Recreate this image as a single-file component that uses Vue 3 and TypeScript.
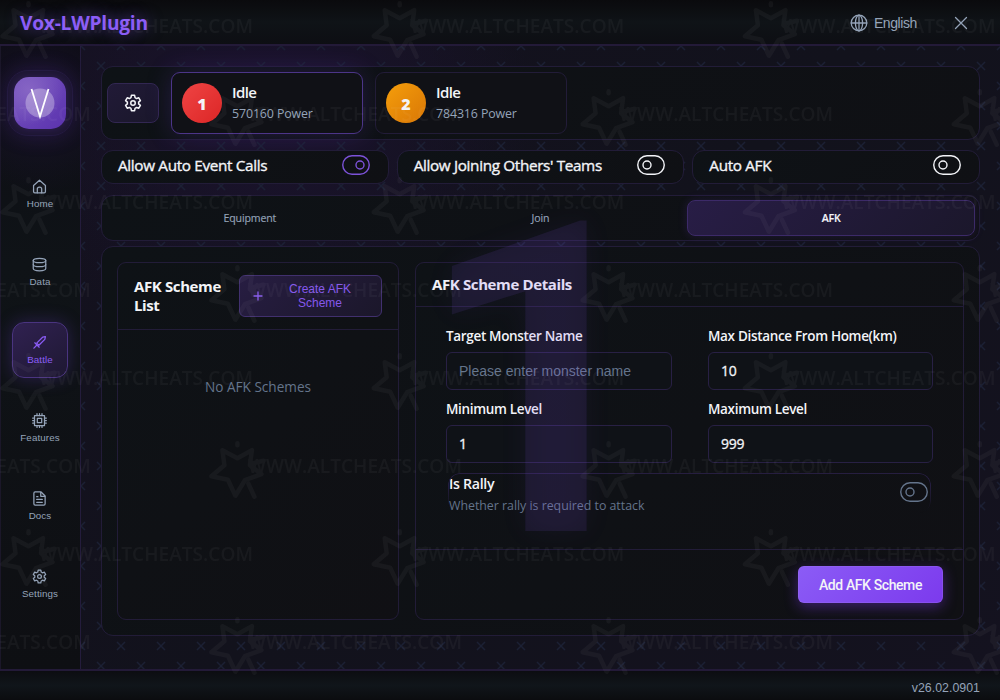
<template>
  <div class="app">
    <header class="title-bar">
      <h1 class="brand">Vox-LWPlugin</h1>
      <div class="title-actions">
        <button class="lang-btn">
          <svg width="18" height="18" viewBox="0 0 18 18" class="icon">
            <circle cx="9" cy="9" r="7.8" />
            <ellipse cx="9" cy="9" rx="3.6" ry="7.8" />
            <path d="M9 1.2v15.6M1.2 9h15.6" />
          </svg>
          <span>English</span>
        </button>
        <button class="close-btn" @click="closeWindow">
          <svg width="14" height="14" viewBox="0 0 14 14" class="icon"><path d="M1.5 1.5l11 11M12.5 1.5l-11 11" /></svg>
        </button>
      </div>
    </header>

    <div class="body">
      <aside class="sidebar">
        <div class="logo-halo">
          <div class="logo">
            <svg width="52" height="52" viewBox="0 0 52 52">
              <circle cx="26" cy="26" r="14.5" fill="#fff" fill-opacity="0.3" />
              <path d="M17.5 12L26 39.5 34.5 12" fill="none" stroke="#fff" stroke-width="1.8" />
            </svg>
          </div>
        </div>
        <nav class="nav">
          <button
            v-for="item in navItems"
            :key="item.label"
            class="nav-item"
            :class="{ active: item.label === activeNav }"
            @click="activeNav = item.label"
          >
            <svg width="15" height="15" viewBox="0 0 24 24" class="nav-icon">
              <path v-for="d in item.paths" :key="d" :d="d" />
            </svg>
            <span>{{ item.label }}</span>
          </button>
        </nav>
      </aside>

      <main class="content">
        <section class="panel account-bar">
          <button class="gear-btn">
            <svg width="18" height="18" viewBox="0 0 24 24" class="gear-icon">
              <path :d="gearPath" />
              <circle cx="12" cy="12" r="3" />
            </svg>
          </button>
          <div
            v-for="account in accounts"
            :key="account.id"
            class="account"
            :class="{ selected: account.id === selectedId }"
            @click="selectedId = account.id"
          >
            <div class="badge" :class="account.tone">{{ account.id }}</div>
            <div class="account-info">
              <div class="account-state">{{ account.state }}</div>
              <div class="account-power">{{ account.power }} Power</div>
            </div>
          </div>
        </section>

        <section class="toggles">
          <div v-for="t in toggles" :key="t.label" class="panel toggle-card">
            <span>{{ t.label }}</span>
            <svg width="28" height="20" viewBox="0 0 28 20" class="toggle" :class="{ on: t.on }" @click="t.on = !t.on">
              <rect x="0.75" y="0.75" width="26.5" height="18.5" rx="9.25" />
              <circle :cx="t.on ? 18 : 10" cy="10" r="4" />
            </svg>
          </div>
        </section>

        <section class="panel tabs">
          <button v-for="tab in tabs" :key="tab" class="tab" :class="{ active: tab === activeTab }" @click="activeTab = tab">
            {{ tab }}
          </button>
        </section>

        <section class="panel workspace">
          <div class="card list-card">
            <div class="list-header">
              <h2>AFK Scheme List</h2>
              <button class="create-btn">
                <svg width="10" height="10" viewBox="0 0 10 10" class="icon"><path d="M5 1v8M1 5h8" /></svg>
                <span>Create AFK Scheme</span>
              </button>
            </div>
            <div class="empty">No AFK Schemes</div>
          </div>

          <div class="card detail-card">
            <div class="detail-header"><h2>AFK Scheme Details</h2></div>
            <div class="form">
              <div class="form-grid">
                <label class="field">
                  <span>Target Monster Name</span>
                  <input v-model="form.monster" type="text" placeholder="Please enter monster name" />
                </label>
                <label class="field">
                  <span>Max Distance From Home(km)</span>
                  <input v-model="form.distance" type="text" />
                </label>
                <label class="field">
                  <span>Minimum Level</span>
                  <input v-model="form.minLevel" type="text" />
                </label>
                <label class="field">
                  <span>Maximum Level</span>
                  <input v-model="form.maxLevel" type="text" />
                </label>
              </div>
              <div class="rally">
                <div>
                  <div class="rally-title">Is Rally</div>
                  <div class="rally-hint">Whether rally is required to attack</div>
                </div>
                <svg width="28" height="20" viewBox="0 0 28 20" class="toggle muted" @click="form.rally = !form.rally">
                  <rect x="0.75" y="0.75" width="26.5" height="18.5" rx="9.25" />
                  <circle :cx="form.rally ? 18 : 10" cy="10" r="4" />
                </svg>
              </div>
            </div>
            <div class="detail-footer">
              <button class="submit-btn">Add AFK Scheme</button>
            </div>
          </div>
        </section>
      </main>
    </div>

    <footer class="status-bar">v26.02.0901</footer>

    <div class="ghost-number">{{ selectedId }}</div>

    <svg class="watermark" width="1000" height="700" viewBox="0 0 1000 700">
      <g v-for="m in marks" :key="m.key" :transform="`translate(${m.x} ${m.y})`">
        <path
          d="M-15 -20.5L0 -12.5 14.5 -20.5 12.5 -5.5 24 3.5 7.5 9.5 -2 25 -9.5 9 -26 5.5 -13 -5.5Z M0 -27.5v2 M11 13l6 13 M14 -7l12 -3"
        />
        <text x="10.5" y="2" textLength="214">WWW.ALTCHEATS.COM</text>
      </g>
    </svg>
  </div>
</template>

<script setup lang="ts">
import { reactive, ref } from "vue";

interface NavItem {
  label: string;
  paths: string[];
}

interface Account {
  id: number;
  state: string;
  power: number;
  tone: string;
}

// six-tooth gear on a 24x24 grid
const buildGear = () => {
  const points: string[] = [];
  for (let k = 0; k < 6; k++) {
    const base = -90 + k * 60;
    for (const [offset, radius] of [[-21, 7.6], [-12, 10.4], [12, 10.4], [21, 7.6]]) {
      const a = ((base + offset) * Math.PI) / 180;
      points.push(`${(12 + radius * Math.cos(a)).toFixed(2)} ${(12 + radius * Math.sin(a)).toFixed(2)}`);
    }
  }
  return `M${points.join("L")}Z`;
};

const gearPath = buildGear();

const navItems: NavItem[] = [
  { label: "Home", paths: ["M2.5 10.5L12 2l9.5 8.5V20q0 2-2 2h-15q-2 0-2-2z", "M8.5 22v-6q0-3 3.5-3t3.5 3v6"] },
  {
    label: "Data",
    paths: [
      "M2 5.5c0-2 4-3.5 10-3.5s10 1.5 10 3.5-4 3.5-10 3.5S2 7.5 2 5.5z",
      "M2 5.5v13c0 2 4 3.5 10 3.5s10-1.5 10-3.5v-13",
      "M2 12c0 2 4 3.5 10 3.5s10-1.5 10-3.5",
    ],
  },
  { label: "Battle", paths: ["M7.5 13L17 3.5l4.5-1-1 4.5L11 16.5z", "M4.5 12.5l7 7", "M7.5 16.5l-4.5 4.5"] },
  {
    label: "Features",
    paths: [
      "M4 4h16v16H4z",
      "M8.5 8.5h7v7h-7z",
      "M8 1v3M12 1v3M16 1v3M8 20v3M12 20v3M16 20v3M1 8h3M1 12h3M1 16h3M20 8h3M20 12h3M20 16h3",
    ],
  },
  {
    label: "Docs",
    paths: ["M5 1.5h9.5L21 8v12.5q0 2-2 2H5q-2 0-2-2v-17q0-2 2-2z", "M14 2v6.5h6.5", "M7.5 9h2M7.5 13.5h9M7.5 18h9"],
  },
  { label: "Settings", paths: [gearPath, "M15 12a3 3 0 1 1-6 0 3 3 0 0 1 6 0z"] },
];

const accounts: Account[] = [
  { id: 1, state: "Idle", power: 570160, tone: "red" },
  { id: 2, state: "Idle", power: 784316, tone: "orange" },
];

const toggles = reactive([
  { label: "Allow Auto Event Calls", on: true },
  { label: "Allow Joining Others' Teams", on: false },
  { label: "Auto AFK", on: false },
]);

const tabs = ["Equipment", "Join", "AFK"];

const activeNav = ref("Battle");
const activeTab = ref("AFK");
const selectedId = ref(1);

const form = reactive({
  monster: "",
  distance: "10",
  minLevel: "1",
  maxLevel: "999",
  rally: false,
});

// odd rows are shifted so the marks form a brick layout
const marks = Array.from({ length: 8 }, (_, row) =>
  [0, 1, 2, 3].map((col) => ({
    key: `${row}-${col}`,
    x: 28.5 + col * 371.2 - (row % 2 ? 162.3 : 0),
    y: 30.7 + row * 88,
  }))
)
  .flat()
  .filter((m) => m.x < 1020);

const closeWindow = () => window.close();
</script>

<style>
body {
  background: #0d0f14;
}
</style>

<style scoped>
* {
  box-sizing: border-box;
}

.app {
  position: relative;
  display: flex;
  flex-direction: column;
  width: 1000px;
  height: 700px;
  overflow: hidden;
  color: #f3f4f8;
  font-family: "Open Sans", "Noto Sans", sans-serif;
  background: #14121f;
}

button {
  font-family: "Liberation Sans", Arial, sans-serif;
  padding: 0;
  border: 0;
  background: none;
  color: inherit;
  cursor: pointer;
}

h1,
h2 {
  margin: 0;
}

.icon {
  fill: none;
  stroke: currentColor;
  stroke-width: 1.3;
  stroke-linecap: round;
}

.title-bar {
  display: flex;
  justify-content: space-between;
  align-items: center;
  flex: none;
  height: 46px;
  padding: 1px 32px 0 20px;
  background: linear-gradient(180deg, #0a0a0d, #0f1317 50%, #0d0e13);
  border-bottom: 2px solid #231a38;
}

.brand {
  font-size: 19.2px;
  line-height: 24px;
  font-weight: 700;
  letter-spacing: -0.25px;
  color: #8b5cf6;
  text-shadow: 0 0 16px rgba(139, 92, 246, 0.5);
}

.title-actions {
  display: flex;
  align-items: center;
  gap: 37px;
  color: #94a3b8;
}

.lang-btn {
  display: flex;
  align-items: center;
  gap: 6px;
  font-size: 14px;
  letter-spacing: -0.4px;
}

.close-btn {
  display: flex;
}

.body {
  display: flex;
  flex: none;
  height: 623px;
}

.sidebar {
  display: flex;
  flex-direction: column;
  align-items: center;
  flex: none;
  width: 81px;
  padding: 24px 1px 0 0;
  border-left: 1px solid #1b1729;
  border-right: 1px solid #241c3c;
  background: radial-gradient(circle 90px at 39px 57px, #181229, transparent), linear-gradient(#0c0c13, #0f1317 35%, #0e0f13);
}

.logo-halo {
  padding: 6px;
  border: 1px solid #241b3f;
  border-radius: 21px;
  background: #1d1632;
  box-shadow: 0 0 20px rgba(90, 50, 170, 0.25);
}

.logo {
  display: flex;
  width: 52px;
  height: 52px;
  border-radius: 15px;
  background: radial-gradient(circle at 28% 25%, #8665c4, transparent 65%), linear-gradient(135deg, #7653bf, #5b33ae);
  box-shadow: 0 0 8px rgba(110, 65, 200, 0.25);
}

.nav {
  display: flex;
  flex-direction: column;
  gap: 22px;
  margin-top: 30px;
}

.nav-item {
  display: flex;
  flex-direction: column;
  align-items: center;
  justify-content: center;
  gap: 3px;
  width: 56px;
  height: 56px;
  border: 1px solid transparent;
  border-radius: 12px;
  font-size: 9.8px;
  line-height: 13px;
  letter-spacing: 0.1px;
  color: #94a3b8;
}

.nav-item.active {
  color: #8b5cf6;
  border-color: #4a3480;
  background: linear-gradient(145deg, #302151, #1e1832);
  box-shadow: 0 0 18px rgba(110, 65, 210, 0.3);
}

.nav-icon,
.gear-icon {
  fill: none;
  stroke: currentColor;
  stroke-width: 2;
  stroke-linecap: round;
  stroke-linejoin: round;
}

.nav-icon {
  position: relative;
  left: -0.5px;
}

.content {
  display: flex;
  flex-direction: column;
  flex: 1;
  min-width: 0;
  padding: 20px 20px 0;
  background: url("data:image/svg+xml,%3Csvg xmlns='http://www.w3.org/2000/svg' width='40' height='40'%3E%3Cg stroke='%231b2034' stroke-width='1.4' fill='none'%3E%3Cpath d='M-4-4l8 8M4-4l-8 8M36-4l8 8M44-4l-8 8M16 16l8 8M24 16l-8 8M-4 36l8 8M4 36l-8 8M36 36l8 8M44 36l-8 8'/%3E%3C/g%3E%3C/svg%3E") 0 0,
    radial-gradient(circle 260px at 190px 60px, #1b132e, transparent), linear-gradient(135deg, #14111f, #12121c 50%, #14121f);
}

.panel {
  border: 1px solid #221c38;
  border-radius: 12px;
  background: linear-gradient(135deg, #0e1216, #0f1014);
}

.account-bar {
  display: flex;
  align-items: center;
  gap: 12px;
  flex: none;
  height: 74px;
  padding: 0 5px;
}

.gear-btn {
  display: flex;
  align-items: center;
  justify-content: center;
  width: 52px;
  height: 40px;
  border: 1px solid #322752;
  border-radius: 8px;
  background: linear-gradient(145deg, #211a37, #1a172b);
}

.account {
  display: flex;
  align-items: center;
  gap: 10px;
  width: 192px;
  height: 62px;
  padding: 0 10px;
  border: 1px solid #221c38;
  border-radius: 9px;
  background: #101116;
}

.account.selected {
  border-color: #4c3588;
  box-shadow: 0 0 24px rgba(100, 55, 190, 0.25);
}

.badge {
  display: flex;
  align-items: center;
  justify-content: center;
  width: 40px;
  height: 40px;
  padding-top: 1px;
  border-radius: 50%;
  font-size: 16px;
  font-weight: 800;
}

.badge.red {
  background: linear-gradient(135deg, #ef4444, #dc2626);
}

.badge.orange {
  background: linear-gradient(135deg, #f59e0b, #d97706);
}

.account-info {
  padding-top: 1px;
}

.account-state {
  font-size: 15px;
  line-height: 21px;
  font-weight: 600;
  letter-spacing: -0.6px;
}

.account-power {
  font-size: 12.4px;
  line-height: 22px;
  letter-spacing: -0.12px;
  color: #94a3b8;
}

.toggles {
  display: grid;
  grid-template-columns: repeat(3, 1fr);
  gap: 8px;
  flex: none;
  margin-top: 10px;
}

.toggle-card {
  display: flex;
  align-items: center;
  justify-content: space-between;
  height: 34px;
  padding: 0 18px 4px 16px;
  font-size: 15.3px;
  letter-spacing: -0.35px;
  -webkit-text-stroke: 0.35px currentColor;
}

.toggle {
  flex: none;
  fill: none;
  stroke: #f3f4f8;
  stroke-width: 1.4;
}

.toggle.on {
  stroke: #7c52d8;
}

.toggle.muted {
  stroke: #64748b;
}

.tabs {
  display: grid;
  grid-template-columns: repeat(3, 1fr);
  gap: 3px;
  flex: none;
  height: 46px;
  margin-top: 11px;
  padding: 4px;
}

.tab {
  border: 1px solid transparent;
  border-radius: 8px;
  font-family: "Open Sans", "Noto Sans", sans-serif;
  font-size: 10.6px;
  letter-spacing: -0.15px;
  color: #94a3b8;
  -webkit-text-stroke: 0.15px currentColor;
}

.tab.active {
  color: #f3f4f8;
  font-weight: 600;
  border-color: #3c2a68;
  background: linear-gradient(135deg, #281d46, #1b172b);
  box-shadow: 0 0 10px rgba(100, 55, 190, 0.2);
}

.workspace {
  display: flex;
  gap: 16px;
  flex: none;
  height: 390px;
  margin-top: 5px;
  padding: 15px;
}

.card {
  display: flex;
  flex-direction: column;
  border: 1px solid #221c38;
  border-radius: 9px;
  background: linear-gradient(135deg, #0e1216, #101014);
}

.card h2 {
  font-size: 15px;
  line-height: 19px;
  font-weight: 700;
  letter-spacing: -0.38px;
}

.list-card {
  width: 282px;
}

.list-header {
  display: flex;
  align-items: center;
  justify-content: space-between;
  height: 67px;
  padding: 0 16px;
  border-bottom: 1px solid #221c38;
}

.list-header h2 {
  width: 95px;
  padding-bottom: 1px;
}

.create-btn {
  display: flex;
  align-items: center;
  width: 143px;
  height: 42px;
  padding: 0 13px;
  border: 1px solid #41306e;
  border-radius: 6px;
  background: linear-gradient(135deg, #271d42, #1b172a);
  color: #8558eb;
  font-size: 12px;
  line-height: 14px;
}

.create-btn span {
  flex: 1;
  padding: 0 9px 0 18px;
}

.empty {
  margin-top: 46px;
  text-align: center;
  font-size: 13.6px;
  line-height: 22px;
  color: #64748b;
}

.detail-card {
  flex: 1;
}

.detail-header {
  display: flex;
  align-items: center;
  height: 44px;
  padding: 0 16px;
  border-bottom: 1px solid #221c38;
}

.form {
  flex: 1;
  padding: 19px 30px 0;
}

.form-grid {
  display: grid;
  grid-template-columns: 226px 225px;
  column-gap: 36px;
  row-gap: 9px;
}

.field span {
  display: block;
  height: 26px;
  font-size: 13.5px;
  line-height: 21px;
  font-weight: 600;
  letter-spacing: -0.33px;
  white-space: nowrap;
}

.field input {
  display: block;
  width: 100%;
  height: 38px;
  padding: 0 12px 2px;
  border: 1px solid #282044;
  border-radius: 6px;
  outline: none;
  background: #0f1217;
  color: #f3f4f8;
  font-family: "Open Sans", "Noto Sans", sans-serif;
  font-size: 14px;
  letter-spacing: -0.2px;
  -webkit-text-stroke: 0.3px currentColor;
}

.field input::placeholder {
  color: #64748b;
  font-family: "Liberation Sans", Arial, sans-serif;
  font-size: 14px;
  letter-spacing: 0;
  -webkit-text-stroke: 0;
}

.rally {
  position: relative;
  display: flex;
  justify-content: space-between;
  align-items: flex-start;
  width: 483px;
  height: 40px;
  margin: 10px 0 0 2px;
  padding: 0 3px 0 1px;
}

.rally .toggle {
  margin-top: 9px;
}

.rally::before {
  content: "";
  position: absolute;
  inset: 0;
  border: 1px solid #261e40;
  border-bottom: 0;
  border-radius: 12px;
  mask-image: linear-gradient(#000 30%, transparent);
}

.rally-title {
  font-size: 14.2px;
  line-height: 22px;
  font-weight: 600;
  letter-spacing: -0.3px;
}

.rally-hint {
  font-size: 12.4px;
  line-height: 22px;
  letter-spacing: -0.03px;
  color: #64748b;
}

.detail-footer {
  display: flex;
  justify-content: flex-end;
  height: 70px;
  padding: 16px 20px 0;
  border-top: 1px solid #221c38;
}

.submit-btn {
  width: 145px;
  height: 37px;
  border-radius: 6px;
  background: linear-gradient(135deg, #8b5cf6, #7c3aed);
  box-shadow: 0 4px 14px rgba(124, 58, 237, 0.4), inset 0 0 0 1px rgba(160, 120, 240, 0.3);
  color: #f3f4f8;
  font-family: Roboto, "Open Sans", sans-serif;
  font-size: 14px;
  font-weight: 500;
  letter-spacing: -0.4px;
}

.status-bar {
  display: flex;
  align-items: center;
  justify-content: flex-end;
  flex: none;
  height: 31px;
  padding: 5px 20px 0;
  border-top: 2px solid #231a38;
  background: linear-gradient(180deg, #0c0d11, #10151a 50%, #0b0c0f);
  color: #94a3b8;
  font-family: "Liberation Sans", Arial, sans-serif;
  font-size: 12.4px;
}

.ghost-number {
  position: absolute;
  left: 416px;
  top: 126px;
  font-family: Roboto, sans-serif;
  font-size: 436px;
  line-height: 512px;
  font-weight: 700;
  color: rgba(139, 92, 246, 0.1);
  text-shadow: 0 0 30px rgba(139, 92, 246, 0.06);
  pointer-events: none;
}

.watermark {
  position: absolute;
  inset: 0;
  opacity: 0.037;
  pointer-events: none;
}

.watermark path {
  fill: none;
  stroke: #fff;
  stroke-width: 4.5;
  stroke-linecap: round;
  stroke-linejoin: round;
}

.watermark text {
  fill: #fff;
  font-family: "Open Sans", "Noto Sans", sans-serif;
  font-size: 19px;
  font-weight: 600;
}
</style>
